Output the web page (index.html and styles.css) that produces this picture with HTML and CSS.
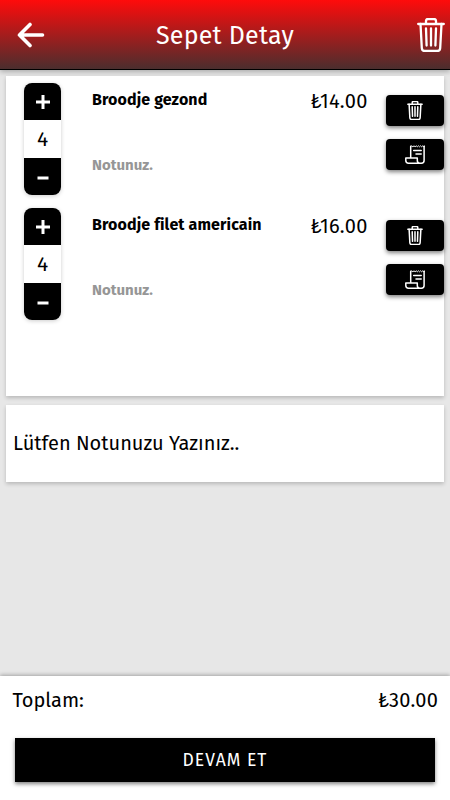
FILE: index.html
```html
<!DOCTYPE html>
<html lang="tr">
<head>
<meta charset="utf-8">
<meta name="viewport" content="width=device-width, initial-scale=1">
<title>Sepet Detay</title>
<link rel="stylesheet" href="styles.css">
</head>
<body>
<svg class="defs" width="0" height="0">
  <symbol id="trash" viewBox="0 0 28 34">
    <g fill="none" stroke="currentColor" stroke-linecap="round" stroke-linejoin="round">
      <path d="M1.200 6h25.600M9 6V3q0-2 2-2h6q2 0 2 2v3"/>
      <path d="M3.500 6l1.300 24q.2 3 3 3h12.400q2.800 0 3-3L24.500 6"/>
      <path d="M9 10.500l.6 17M14 10.500v17M19 10.500l-.6 17"/>
    </g>
  </symbol>
  <symbol id="receipt" viewBox="0 0 20 19">
    <g fill="none" stroke="currentColor" stroke-width="1.500" stroke-linejoin="round" stroke-linecap="round">
      <path d="M5.700 12.500V1.300M19.100 1.300v14.200q0 2.700-2.700 2.700H3.500Q.8 18.200.8 15.500V13h11.500v2.500q0 2.700 2.700 2.700"/>
      <path stroke-width="1" d="M5.700 1.800l1.100-1 1.100 1 1.100-1 1.100 1 1.100-1 1.100 1 1.100-1 1.100 1 1.100-1 1.100 1 1.100-1 1.100 1 1.100-1"/>
      <path d="M8.700 5.500h7.500M11 8.900h5.200"/>
    </g>
  </symbol>
</svg>
<header class="topbar">
  <svg class="back" viewBox="0 0 28 26"><path d="M13 2.500L2.500 13l10.500 10.500M2.500 13H25.500" fill="none" stroke="currentColor" stroke-width="3.600" stroke-linecap="round" stroke-linejoin="round"/></svg>
  <h1 class="title">Sepet Detay</h1>
  <svg class="clear"><use href="#trash"/></svg>
</header>
<main class="content">
  <section class="card items">
    <article class="item">
      <div class="stepper">
        <button class="step plus" aria-label="+"><svg viewBox="0 0 14 14"><path d="M7 0v14M0 7h14"/></svg></button>
        <span class="count">4</span>
        <button class="step minus" aria-label="−"><svg viewBox="0 0 14 14"><path d="M1.500 7h11"/></svg></button>
      </div>
      <div class="info"><h2 class="name">Broodje gezond</h2><p class="note">Notunuz.</p></div>
      <span class="price">₺14.00</span>
      <div class="actions">
        <button class="action"><svg class="icon-trash"><use href="#trash"/></svg></button>
        <button class="action"><svg class="icon-receipt"><use href="#receipt"/></svg></button>
      </div>
    </article>
    <article class="item">
      <div class="stepper">
        <button class="step plus" aria-label="+"><svg viewBox="0 0 14 14"><path d="M7 0v14M0 7h14"/></svg></button>
        <span class="count">4</span>
        <button class="step minus" aria-label="−"><svg viewBox="0 0 14 14"><path d="M1.500 7h11"/></svg></button>
      </div>
      <div class="info"><h2 class="name">Broodje filet americain</h2><p class="note">Notunuz.</p></div>
      <span class="price">₺16.00</span>
      <div class="actions">
        <button class="action"><svg class="icon-trash"><use href="#trash"/></svg></button>
        <button class="action"><svg class="icon-receipt"><use href="#receipt"/></svg></button>
      </div>
    </article>
  </section>
  <section class="card message"><span class="message-text">Lütfen Notunuzu Yazınız..</span></section>
</main>
<footer class="summary">
  <div class="total"><span class="total-label">Toplam:</span><span class="total-value">₺30.00</span></div>
  <button class="continue">DEVAM ET</button>
</footer>
</body>
</html>
```
FILE: styles.css
```css
* { box-sizing: border-box; }
body {
  margin: 0;
  height: 800px;
  display: flex;
  flex-direction: column;
  overflow: hidden;
  background: #e7e7e7;
  color: #000;
  font-family: "Fira Sans", "Noto Sans", sans-serif;
  white-space: nowrap;
}
h1, h2, p { margin: 0; }
button { border: 0; padding: 0; background: #000; color: #fff; font-family: inherit; }
svg { display: block; }
.defs { position: absolute; }
.topbar {
  height: 70px;
  flex: none;
  display: grid;
  grid-template-columns: 60px 1fr 60px;
  align-items: center;
  color: #fff;
  background: linear-gradient(#ff0b0b, #4b2e2e);
  border-bottom: 1px solid #000;
  box-shadow: 0 2px 5px rgba(0, 0, 0, .25);
}
.back { width: 28px; height: 26px; margin-left: 17px; }
.title { text-align: center; font-size: 25px; font-weight: 400; letter-spacing: .25px; padding-top: 2px; }
.clear { width: 28px; height: 34px; margin-left: 27px; stroke-width: 2.300; }
.content { flex: 1; padding: 6px 6px 0; }
.card { background: #fff; box-shadow: 0 2px 4px rgba(0, 0, 0, .2); }
.items { height: 320px; padding: 7px 0 0 18px; }
.item { height: 125px; display: grid; grid-template-columns: 68px 218.500px 75.500px 58px; }
.stepper {
  width: 37px;
  height: 112px;
  display: grid;
  grid-template-rows: 37px 38px 37px;
  border-radius: 8px;
  overflow: hidden;
  box-shadow: 0 1px 4px rgba(0, 0, 0, .2);
}
.step { display: grid; place-items: center; }
.step svg { width: 14px; height: 14px; fill: none; stroke: #fff; stroke-width: 3; }
.minus svg { margin-top: 2px; }
.count { text-align: center; font-size: 21px; font-weight: 400; line-height: 38px; }
.name { font-size: 16px; font-weight: 700; letter-spacing: .12px; line-height: 22px; margin-top: 6px; }
.note { font-size: 15px; font-weight: 700; line-height: 20px; color: #969696; margin-top: 44px; }
.price { font-size: 20px; letter-spacing: .3px; line-height: 26px; margin-top: 5px; }
.actions { padding-top: 12px; display: flex; flex-direction: column; gap: 13px; }
.action {
  height: 31px;
  display: grid;
  place-items: center;
  border-radius: 4px;
  box-shadow: 0 2px 4px rgba(0, 0, 0, .5);
}
.icon-trash { width: 16px; height: 19px; stroke-width: 2.700; }
.icon-receipt { width: 20px; height: 19px; }
.message { height: 77px; margin-top: 9px; padding-left: 7px; display: flex; align-items: center; font-size: 20px; line-height: 23px; padding-bottom: 1px; }
.summary { height: 124px; background: #fff; box-shadow: 0 -1px 4px rgba(0, 0, 0, .3); }
.total { height: 62px; padding: 11px 12px 0 12.500px; display: flex; justify-content: space-between; font-size: 20px; line-height: 27px; }
.total-value { letter-spacing: .2px; }
.continue {
  display: block;
  width: 420px;
  height: 44px;
  margin: 0 15px;
  font-size: 17.500px;
  letter-spacing: 1px;
  box-shadow: 0 2px 4px rgba(0, 0, 0, .5);
}
```
